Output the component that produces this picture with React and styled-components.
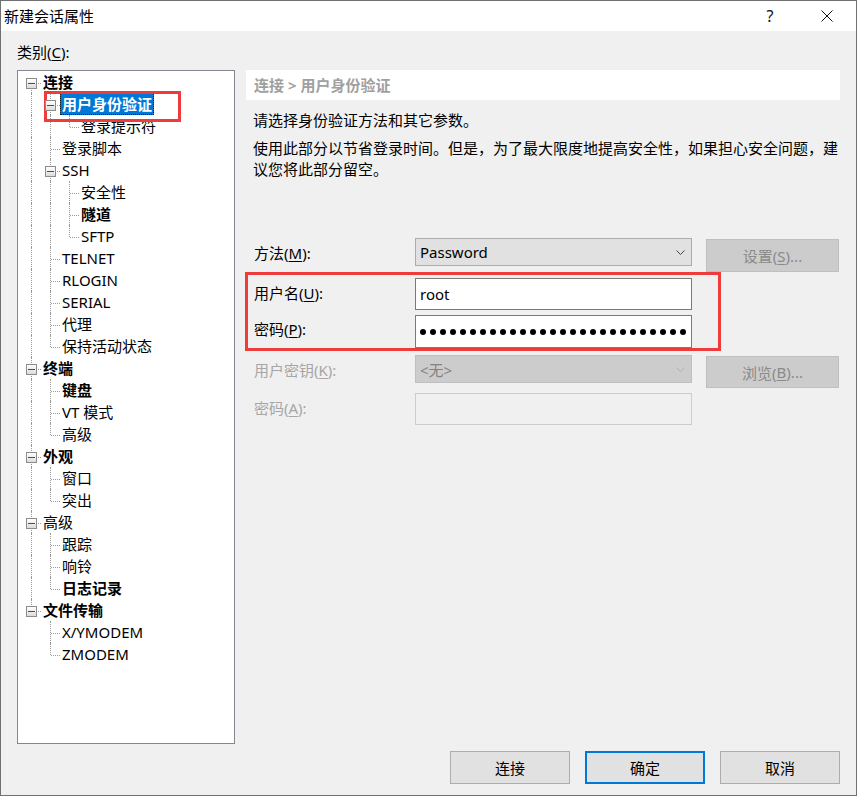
import React from 'react';
import styled, { createGlobalStyle, css } from 'styled-components';

const Global = createGlobalStyle`
  html, body { margin: 0; padding: 0; background: #f0f0f0; }
  body { font-family: "Noto Sans", "Noto Sans CJK SC", sans-serif; }
  * { box-sizing: border-box; }
`;

const FONT = `"Noto Sans", "Noto Sans CJK SC", sans-serif`;

const Window = styled.div`
  width: 857px;
  height: 796px;
  border: 1px solid #707070;
  display: flex;
  flex-direction: column;
  background: #f0f0f0;
  font-family: ${FONT};
  font-size: 15px;
  color: #000;
`;

const TitleBar = styled.div`
  flex: none;
  height: 30px;
  background: #fff;
  display: flex;
  align-items: center;
  padding-left: 3px;
`;

const Title = styled.div`
  flex: 1;
  line-height: 30px;
  font-size: 15px;
`;

const CaptionButton = styled.div`
  width: 46px;
  height: 30px;
  display: flex;
  align-items: center;
  justify-content: center;
  font-size: 16px;
  color: #111;
  margin-right: ${p => p.$mr}px;
`;

const Body = styled.div`
  flex: 1;
  display: flex;
  flex-direction: column;
  padding: 11px 16px 0 16px;
`;

const CategoryLabel = styled.div`
  height: 20px;
  line-height: 20px;
`;

const Mn = styled.u`
  text-underline-offset: 2px;
  text-decoration-thickness: 1px;
`;

const Main = styled.div`
  display: flex;
  gap: 11px;
  margin-top: 8px;
  height: 674px;
`;

const TreeBox = styled.div`
  position: relative;
  flex: none;
  width: 218px;
  background: #fff;
  border: 1px solid #828790;
  padding-left: 4px;
`;

const TreeRow = styled.div`
  display: flex;
  height: 22px;
  align-items: stretch;
`;

const lineColor = '#9a9a9a';

const Guide = styled.div`
  flex: none;
  width: 19px;
  position: relative;
  ${p => p.$pipe && css`
    &::before {
      content: '';
      position: absolute;
      left: 9px;
      top: 0;
      bottom: 0;
      border-left: 1px dotted ${lineColor};
    }
  `}
`;

const Branch = styled.div`
  flex: none;
  width: 19px;
  position: relative;
  &::before {
    content: '';
    position: absolute;
    left: 9px;
    top: ${p => (p.$kind === 'first' ? '12px' : '0')};
    ${p => (p.$kind === 'elbow' ? 'height: 12px;' : 'bottom: 0;')}
    border-left: 1px dotted ${lineColor};
  }
  &::after {
    content: '';
    position: absolute;
    left: 10px;
    right: 0;
    top: 12px;
    border-top: 1px dotted ${lineColor};
  }
`;

const Expander = styled.div`
  position: relative;
  z-index: 1;
  margin: 7px 0 0 4px;
  width: 11px;
  height: 11px;
  border: 1px solid #8c8c8c;
  background: linear-gradient(180deg, #ffffff 0%, #dcdcdc 100%);
  display: flex;
  align-items: center;
  justify-content: center;
  &::after {
    content: '';
    width: 7px;
    height: 1px;
    background: #2b4f96;
  }
`;

const NodeLabel = styled.span`
  display: block;
  padding: 0 2px;
  line-height: 22px;
  white-space: nowrap;
  font-weight: ${p => (p.$bold ? 700 : 400)};
  ${p => p.$selected && css`
    background: #0078d7;
    color: #fff;
    outline: 1px dotted #1a1a1a;
    outline-offset: -1px;
  `}
`;

const Annotation = styled.div`
  position: absolute;
  pointer-events: none;
  border: 3px solid #ee3b3b;
  left: ${p => p.$x}px;
  top: ${p => p.$y}px;
  width: ${p => p.$w}px;
  height: ${p => p.$h}px;
`;

const Panel = styled.div`
  position: relative;
  flex: 1;
  min-width: 0;
  display: flex;
  flex-direction: column;
`;

const Header = styled.div`
  height: 30px;
  line-height: 30px;
  background: #fff;
  padding-left: 8px;
  font-weight: 700;
  color: #a0a0a0;
`;

const Para = styled.p`
  margin: ${p => p.$mt}px 0 0 0;
  padding-left: 7px;
  line-height: 21px;
`;

const Form = styled.div`
  margin-top: 58px;
  padding-left: 8px;
  display: flex;
  flex-direction: column;
`;

const FormRow = styled.div`
  display: grid;
  grid-template-columns: 147px 277px 133px;
  column-gap: 14px;
  align-items: start;
  height: ${p => p.$h}px;
`;

const FieldLabel = styled.div`
  line-height: ${p => p.$lh}px;
  white-space: nowrap;
  color: ${p => (p.$disabled ? '#a6a6a6' : '#000')};
`;

const Select = styled.div`
  height: ${p => p.$h}px;
  display: flex;
  align-items: center;
  padding: 0 6px 0 4px;
  background: ${p => (p.$disabled ? '#cccccc' : '#e1e1e1')};
  border: 1px solid ${p => (p.$disabled ? '#bfbfbf' : '#adadad')};
  color: ${p => (p.$disabled ? '#838383' : '#000')};
  & > svg { margin-left: auto; }
`;

const TextBox = styled.div`
  height: ${p => p.$h}px;
  display: flex;
  align-items: center;
  padding-left: 4px;
  background: ${p => (p.$disabled ? '#f0f0f0' : '#fff')};
  border: 1px solid ${p => (p.$disabled ? '#cccccc' : '#7a7a7a')};
`;

const Dots = styled.div`
  display: flex;
  gap: 4px;
`;

const Dot = styled.span`
  width: 6px;
  height: 6px;
  border-radius: 50%;
  background: #000;
`;

const SideButton = styled.div`
  margin-top: 1px;
  height: ${p => p.$h}px;
  display: flex;
  align-items: center;
  justify-content: center;
  background: #cccccc;
  border: 1px solid #bfbfbf;
  color: #8a8a8a;
`;

const Footer = styled.div`
  display: flex;
  justify-content: flex-end;
  gap: 15px;
  margin-top: 7px;
`;

const DialogButton = styled.button`
  width: 120px;
  height: 33px;
  padding: 0;
  background: #e1e1e1;
  border: 1px solid #adadad;
  font-family: ${FONT};
  font-size: 15px;
  color: #000;
  ${p => p.$default && css`border: 2px solid #0078d7;`}
`;

const Chevron = ({ color }) => (
  <svg width="9" height="5" viewBox="0 0 9 5">
    <path d="M0.5 0.5 L4.5 4.5 L8.5 0.5" fill="none" stroke={color} strokeWidth="1" />
  </svg>
);

const tree = [
  {
    label: '连接', bold: true, children: [
      { label: '用户身份验证', bold: true, selected: true, children: [{ label: '登录提示符' }] },
      { label: '登录脚本' },
      { label: 'SSH', children: [{ label: '安全性' }, { label: '隧道', bold: true }, { label: 'SFTP' }] },
      { label: 'TELNET' },
      { label: 'RLOGIN' },
      { label: 'SERIAL' },
      { label: '代理' },
      { label: '保持活动状态' },
    ],
  },
  { label: '终端', bold: true, children: [{ label: '键盘', bold: true }, { label: 'VT 模式' }, { label: '高级' }] },
  { label: '外观', bold: true, children: [{ label: '窗口' }, { label: '突出' }] },
  { label: '高级', children: [{ label: '跟踪' }, { label: '响铃' }, { label: '日志记录', bold: true }] },
  { label: '文件传输', bold: true, children: [{ label: 'X/YMODEM' }, { label: 'ZMODEM' }] },
];

function flatten(nodes, ancestors = [], depth = 0, out = []) {
  nodes.forEach((n, i) => {
    const isLast = i === nodes.length - 1;
    const kind = depth === 0 && i === 0 ? 'first' : isLast ? 'elbow' : 'tee';
    out.push({ ...n, guides: ancestors, kind, hasChildren: !!n.children });
    if (n.children) flatten(n.children, [...ancestors, !isLast], depth + 1, out);
  });
  return out;
}

const rows = flatten(tree);

export default function App() {
  return (
    <>
      <Global />
      <Window>
        <TitleBar>
          <Title>新建会话属性</Title>
          <CaptionButton $mr={11}>?</CaptionButton>
          <CaptionButton $mr={6}>
            <svg width="12" height="12" viewBox="0 0 12 12">
              <path d="M0.5 0.5 L11.5 11.5 M11.5 0.5 L0.5 11.5" stroke="#111" strokeWidth="1" />
            </svg>
          </CaptionButton>
        </TitleBar>
        <Body>
          <CategoryLabel>类别(<Mn>C</Mn>):</CategoryLabel>
          <Main>
            <TreeBox>
              {rows.map((r, i) => (
                <TreeRow key={i}>
                  {r.guides.map((g, j) => <Guide key={j} $pipe={g} />)}
                  <Branch $kind={r.kind}>{r.hasChildren && <Expander />}</Branch>
                  <NodeLabel $bold={r.bold} $selected={r.selected}>{r.label}</NodeLabel>
                </TreeRow>
              ))}
              <Annotation $x={26} $y={20} $w={137} $h={31} />
            </TreeBox>
            <Panel>
              <Header>连接 &gt; 用户身份验证</Header>
              <Para $mt={10}>请选择身份验证方法和其它参数。</Para>
              <Para $mt={7}>
                使用此部分以节省登录时间。但是，为了最大限度地提高安全性，如果担心安全问题，建<br />议您将此部分留空。
              </Para>
              <Form>
                <FormRow $h={40}>
                  <FieldLabel $lh={30}>方法(<Mn>M</Mn>):</FieldLabel>
                  <Select $h={28}>Password<Chevron color="#444" /></Select>
                  <SideButton $h={33}>设置(<Mn>S</Mn>)...</SideButton>
                </FormRow>
                <FormRow $h={37}>
                  <FieldLabel $lh={31}>用户名(<Mn>U</Mn>):</FieldLabel>
                  <TextBox $h={32}>root</TextBox>
                </FormRow>
                <FormRow $h={40}>
                  <FieldLabel $lh={29}>密码(<Mn>P</Mn>):</FieldLabel>
                  <TextBox $h={33}>
                    <Dots>{Array.from({ length: 27 }).map((_, k) => <Dot key={k} />)}</Dots>
                  </TextBox>
                </FormRow>
                <FormRow $h={38}>
                  <FieldLabel $lh={30} $disabled>用户密钥(<Mn>K</Mn>):</FieldLabel>
                  <Select $h={28} $disabled>&lt;无&gt;<Chevron color="#b0b0b0" /></Select>
                  <SideButton $h={32}>浏览(<Mn>B</Mn>)...</SideButton>
                </FormRow>
                <FormRow $h={32}>
                  <FieldLabel $lh={31} $disabled>密码(<Mn>A</Mn>):</FieldLabel>
                  <TextBox $h={32} $disabled />
                </FormRow>
              </Form>
              <Annotation $x={-1} $y={202} $w={476} $h={79} />
            </Panel>
          </Main>
          <Footer>
            <DialogButton>连接</DialogButton>
            <DialogButton $default>确定</DialogButton>
            <DialogButton>取消</DialogButton>
          </Footer>
        </Body>
      </Window>
    </>
  );
}
